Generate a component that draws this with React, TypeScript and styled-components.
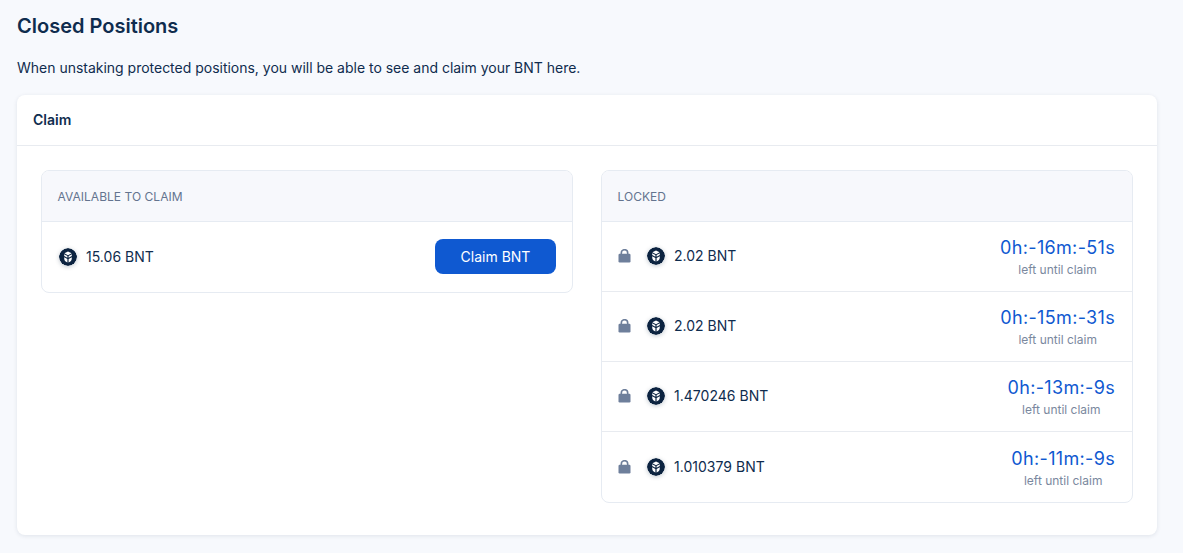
import React from "react";
import styled, { createGlobalStyle } from "styled-components";

const Global = createGlobalStyle`
  html, body { margin: 0; padding: 0; background: #f7f9fd; }
  body { font-family: Inter, "Liberation Sans", sans-serif; color: #0f2c4e; }
`;

const Page = styled.div`
  width: 1183px;
  height: 553px;
  box-sizing: border-box;
  padding: 14px 26px 0 17px;
  overflow: hidden;
`;
const Title = styled.h1`
  margin: 0;
  font-size: 20px;
  line-height: 25px;
  font-weight: 600;
  color: #0f2c4e;
`;
const Description = styled.p`
  margin: 19px 0 0;
  font-size: 14px;
  line-height: 20px;
  letter-spacing: -0.012px;
  color: #0f2c4e;
`;
const Card = styled.section`
  margin-top: 17px;
  background: #fff;
  border-radius: 8px;
  box-shadow: 0 1px 4px rgba(15, 42, 71, 0.1);
  height: 440px;
`;
const CardHeader = styled.header`
  height: 51px;
  box-sizing: border-box;
  padding: 0 16px 2px;
  display: flex;
  align-items: center;
  font-size: 14px;
  font-weight: 600;
  border-bottom: 1px solid #e8ebf0;
`;
const Columns = styled.div`
  display: grid;
  grid-template-columns: 532px 532px;
  column-gap: 28px;
  padding: 24px 24px 0;
  align-items: start;
`;
const Panel = styled.div`
  border: 1px solid #e6ebf2;
  border-radius: 8px;
  overflow: hidden;
`;
const PanelHead = styled.div`
  height: 51px;
  box-sizing: border-box;
  padding: 0 16px 0 15.5px;
  display: flex;
  align-items: center;
  background: #f7f8fc;
  border-bottom: 1px solid #e6ebf2;
  font-size: 12px;
  letter-spacing: 0.03px;
  color: #64748f;
`;
const Row = styled.div<{ $h: number }>`
  height: ${(p) => p.$h}px;
  box-sizing: border-box;
  padding: 0 16px;
  display: flex;
  align-items: center;
  justify-content: space-between;
  & + & {
    border-top: 1px solid #e8ebf0;
  }
`;
const Asset = styled.div`
  display: flex;
  align-items: center;
  margin-bottom: 1px;
  font-size: 14px;
  line-height: 20px;
  letter-spacing: 0.02px;
  color: #0f2c4e;
`;
const Coin = styled.svg`
  width: 18px;
  height: 18px;
  margin-right: 9px;
  border-radius: 50%;
  flex: none;
  box-shadow: 0 1px 4px rgba(15, 42, 71, 0.25);
`;
const SoloCoin = styled.span`
  display: flex;
  padding-left: 1px;
`;
const LockIcon = styled.svg`
  width: 14px;
  height: 14px;
  margin-right: 15px;
  flex: none;
`;
const ClaimButton = styled.button`
  width: 121px;
  height: 35px;
  margin-bottom: 1px;
  border: 0;
  border-radius: 8px;
  background: #0f59d1;
  color: #fff;
  font: 400 14px Inter, "Liberation Sans", sans-serif;
  padding: 0;
`;
const Timer = styled.div`
  text-align: center;
  margin: 2px 1px 0 0;
`;
const Countdown = styled.div`
  font-size: 18px;
  line-height: 22px;
  font-weight: 400;
  letter-spacing: 0.33px;
  color: #0f59d1;
`;
const Note = styled.div`
  margin-top: 3px;
  font-size: 12px;
  line-height: 16px;
  color: #7a889e;
`;

const BancorCoin = () => (
  <Coin viewBox="0 0 18 18">
    <circle cx="9" cy="9" r="9" fill="#0c2340" />
    <path
      d="M9 3.4 12.6 5.3 9 7.2 5.4 5.3ZM5.2 6.3 8.4 8 8.4 9.8 5.2 8.1ZM12.8 6.3 9.6 8 9.6 9.8 12.8 8.1ZM5.2 9.3 8.4 11 8.4 14.4C6.4 13.8 5.2 12.2 5.2 10.4ZM12.8 9.3 9.6 11 9.6 14.4C11.6 13.8 12.8 12.2 12.8 10.4Z"
      fill="#fff"
    />
  </Coin>
);

const Lock = () => (
  <LockIcon viewBox="0 0 14 14">
    <path
      d="M3.3 5.5V3.9a3.2 3.2 0 0 1 6.4 0V5.5"
      fill="none"
      stroke="#6e7f9b"
      strokeWidth="1.6"
    />
    <rect x="0.5" y="4.8" width="12" height="8.7" rx="1.2" fill="#6e7f9b" />
  </LockIcon>
);

const locked = [
  { amount: "2.02 BNT", time: "0h:-16m:-51s", h: 69 },
  { amount: "2.02 BNT", time: "0h:-15m:-31s", h: 70 },
  { amount: "1.470246 BNT", time: "0h:-13m:-9s", h: 70 },
  { amount: "1.010379 BNT", time: "0h:-11m:-9s", h: 71 },
];

export default function App() {
  return (
    <Page>
      <Global />
      <Title>Closed Positions</Title>
      <Description>
        When unstaking protected positions, you will be able to see and claim your BNT here.
      </Description>
      <Card>
        <CardHeader>Claim</CardHeader>
        <Columns>
          <Panel>
            <PanelHead>AVAILABLE TO CLAIM</PanelHead>
            <Row $h={70}>
              <Asset>
                <SoloCoin>
                  <BancorCoin />
                </SoloCoin>
                15.06 BNT
              </Asset>
              <ClaimButton>Claim BNT</ClaimButton>
            </Row>
          </Panel>
          <Panel>
            <PanelHead>LOCKED</PanelHead>
            {locked.map((item, i) => (
              <Row key={i} $h={item.h}>
                <Asset>
                  <Lock />
                  <BancorCoin />
                  {item.amount}
                </Asset>
                <Timer>
                  <Countdown>{item.time}</Countdown>
                  <Note>left until claim</Note>
                </Timer>
              </Row>
            ))}
          </Panel>
        </Columns>
      </Card>
    </Page>
  );
}
